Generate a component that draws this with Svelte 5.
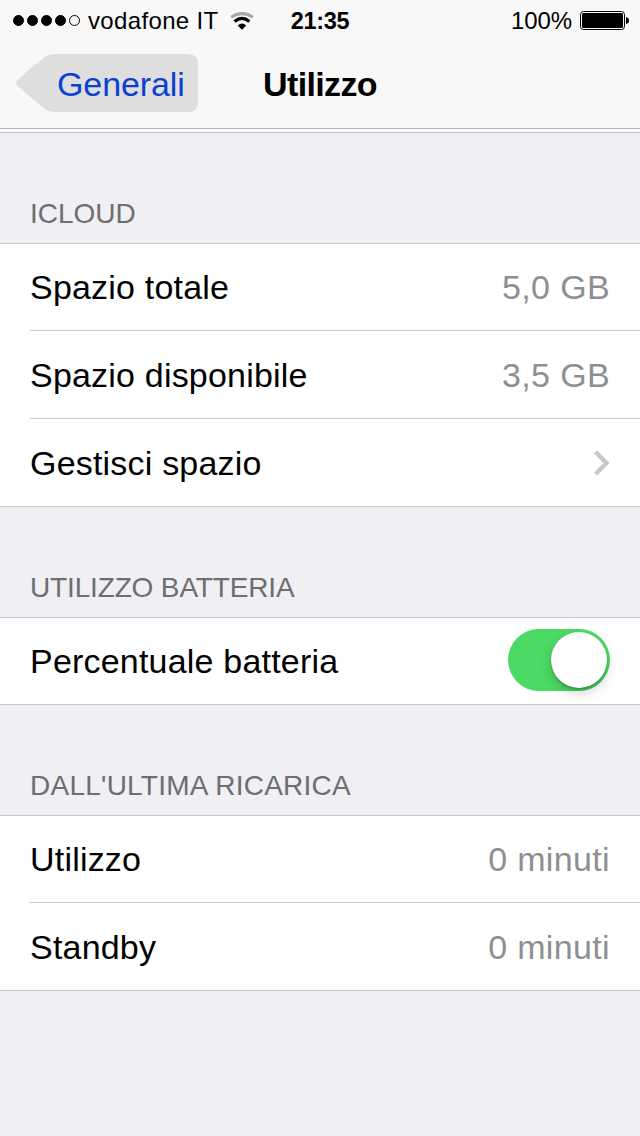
<script lang="ts">
  type Row = { label: string; value?: string; kind?: "link" | "switch" };

  let showPercentage = $state(true);

  const sections: { title: string; tracking: number; rows: Row[] }[] = [
    {
      title: "ICLOUD",
      tracking: 0,
      rows: [
        { label: "Spazio totale", value: "5,0 GB" },
        { label: "Spazio disponibile", value: "3,5 GB" },
        { label: "Gestisci spazio", kind: "link" },
      ],
    },
    {
      title: "UTILIZZO BATTERIA",
      tracking: -0.15,
      rows: [{ label: "Percentuale batteria", kind: "switch" }],
    },
    {
      title: "DALL'ULTIMA RICARICA",
      tracking: 0.25,
      rows: [
        { label: "Utilizzo", value: "0 minuti" },
        { label: "Standby", value: "0 minuti" },
      ],
    },
  ];
</script>

<div class="screen">
  <header>
    <div class="status">
      <div class="carrier">
        <span class="dots">
          {#each [1, 2, 3, 4, 5] as dot}
            <i class:empty={dot === 5}></i>
          {/each}
        </span>
        <span class="name">vodafone IT</span>
        <svg class="wifi" width="24" height="18" viewBox="0 0 24 18">
          <path d="M1.1 5.3Q12 -2.3 22.9 5.3" stroke="#a9a9a9" />
          <path d="M4.6 9.4Q12 3.4 19.4 9.4" stroke="#000" />
          <path d="M7.8 13.4Q12 9.6 16.2 13.4L12 17.8Z" fill="#000" />
        </svg>
      </div>
      <span class="clock">21:35</span>
      <div class="battery">
        <span>100%</span>
        <svg width="50" height="20" viewBox="0 0 50 20">
          <rect x="0.5" y="0.5" width="44" height="18" rx="3" fill="none" stroke="#000" />
          <rect x="2" y="2" width="41" height="15" rx="1.5" />
          <path d="M46 6Q49 6.5 49 9.5T46 13Z" />
        </svg>
      </div>
    </div>
    <nav>
      <button class="back">
        <svg width="182" height="58" viewBox="0 0 182 58">
          <path
            d="M1.3 31.6Q-1.3 29 1.3 26.4Q14 14.5 28 3.5Q33 0 39 0H172Q182 0 182 10V48Q182 58 172 58H39Q33 58 28 54.5Q14 43.5 1.3 31.6Z"
          />
        </svg>
        <span>Generali</span>
      </button>
      <h1>Utilizzo</h1>
    </nav>
  </header>

  <main>
    {#each sections as section}
      <section>
        <h2 style="letter-spacing: {section.tracking}px">{section.title}</h2>
        <ul>
          {#each section.rows as row}
            <li>
              <span>{row.label}</span>
              {#if row.kind === "switch"}
                <button
                  class="switch"
                  class:on={showPercentage}
                  aria-label={row.label}
                  onclick={() => (showPercentage = !showPercentage)}
                ></button>
              {:else if row.kind === "link"}
                <svg class="chevron" width="16" height="26" viewBox="0 0 16 26">
                  <path d="M1.6 2L12.5 13L1.6 24" />
                </svg>
              {:else}
                <span class="value">{row.value}</span>
              {/if}
            </li>
          {/each}
        </ul>
      </section>
    {/each}
  </main>
</div>

<style>
  :global(body) {
    margin: 0;
    background: #efeff4;
  }

  .screen {
    height: 1136px;
    overflow: hidden;
    background: #efeff4;
    color: #000;
    font-family: "Liberation Sans", Arial, sans-serif;
    font-size: 34px;
    letter-spacing: 0.2px;
  }

  header {
    height: 128px;
    background: #f8f8f8;
    border-bottom: 1px solid #b2b2b2;
  }

  .status {
    display: grid;
    grid-template-columns: 1fr auto 1fr;
    align-items: center;
    height: 41px;
    padding: 0 10px 0 13px;
    font-size: 24px;
    line-height: 28px;
  }

  .carrier,
  .battery {
    display: flex;
    align-items: center;
  }

  .dots {
    display: flex;
    gap: 3px;
    margin-right: 8px;
  }

  .dots i {
    box-sizing: border-box;
    width: 11px;
    height: 11px;
    border: 1px solid #000;
    border-radius: 50%;
    background: #000;
  }

  .dots i.empty {
    background: none;
  }

  .name {
    letter-spacing: 0.35px;
  }

  .wifi {
    margin-left: 11px;
  }

  .wifi path {
    fill: none;
    stroke-width: 3.2;
  }

  .wifi path[fill] {
    fill: #000;
  }

  .clock {
    margin-right: 3px;
    font-size: 23.5px;
    font-weight: bold;
    letter-spacing: -0.3px;
  }

  .battery {
    justify-content: flex-end;
    gap: 8px;
    letter-spacing: -0.1px;
  }

  nav {
    display: grid;
    grid-template-columns: 1fr auto 1fr;
    align-items: center;
    height: 87px;
    padding: 0 16px;
  }

  .back {
    display: grid;
    align-items: center;
    justify-self: start;
    width: 182px;
    height: 58px;
    margin-bottom: 4px;
    padding: 0;
    border: 0;
    background: none;
    color: #0b41d3;
    font: inherit;
    letter-spacing: -0.1px;
    text-align: left;
  }

  /* label sits on top of the arrow shape */
  .back svg,
  .back span {
    grid-area: 1 / 1;
  }

  .back svg {
    fill: #dedede;
  }

  .back span {
    padding: 4px 0 0 41px;
  }

  h1 {
    margin: 0;
    font-size: 34px;
    font-weight: bold;
    letter-spacing: -0.65px;
  }

  main {
    border-top: 3px solid #fff;
  }

  section:first-child {
    box-shadow: inset 0 1px #c8c7cc;
    padding-top: 1px;
  }

  h2 {
    box-sizing: border-box;
    height: 110px;
    margin: 0;
    padding: 65px 30px 0;
    color: #6d6d72;
    font-size: 28px;
    font-weight: normal;
    line-height: 32px;
  }

  ul {
    margin: 0;
    padding: 0;
    border: solid #c8c7cc;
    border-width: 1px 0;
    background: #fff;
    list-style: none;
  }

  li {
    box-sizing: border-box;
    display: flex;
    align-items: center;
    justify-content: space-between;
    height: 88px;
    margin-left: 30px;
    padding: 1px 30px 0 0;
  }

  li:first-child {
    height: 86px;
    padding-top: 0;
  }

  li + li {
    border-top: 1px solid #c8c7cc;
  }

  .value {
    color: #8e8e93;
    letter-spacing: 0.35px;
  }

  .chevron path {
    fill: none;
    stroke: #c7c7cc;
    stroke-width: 4.5;
  }

  .switch {
    display: flex;
    width: 102px;
    height: 62px;
    margin-bottom: 2px;
    padding: 3px;
    border: 0;
    border-radius: 31px;
    background: #e5e5ea;
  }

  .switch::before {
    content: "";
    width: 56px;
    height: 56px;
    border-radius: 50%;
    background: #fff;
    box-shadow:
      0 2px 2px rgba(0, 0, 0, 0.2),
      0 5px 12px rgba(0, 0, 0, 0.18);
  }

  .switch.on {
    justify-content: flex-end;
    background: #4cd964;
  }
</style>
